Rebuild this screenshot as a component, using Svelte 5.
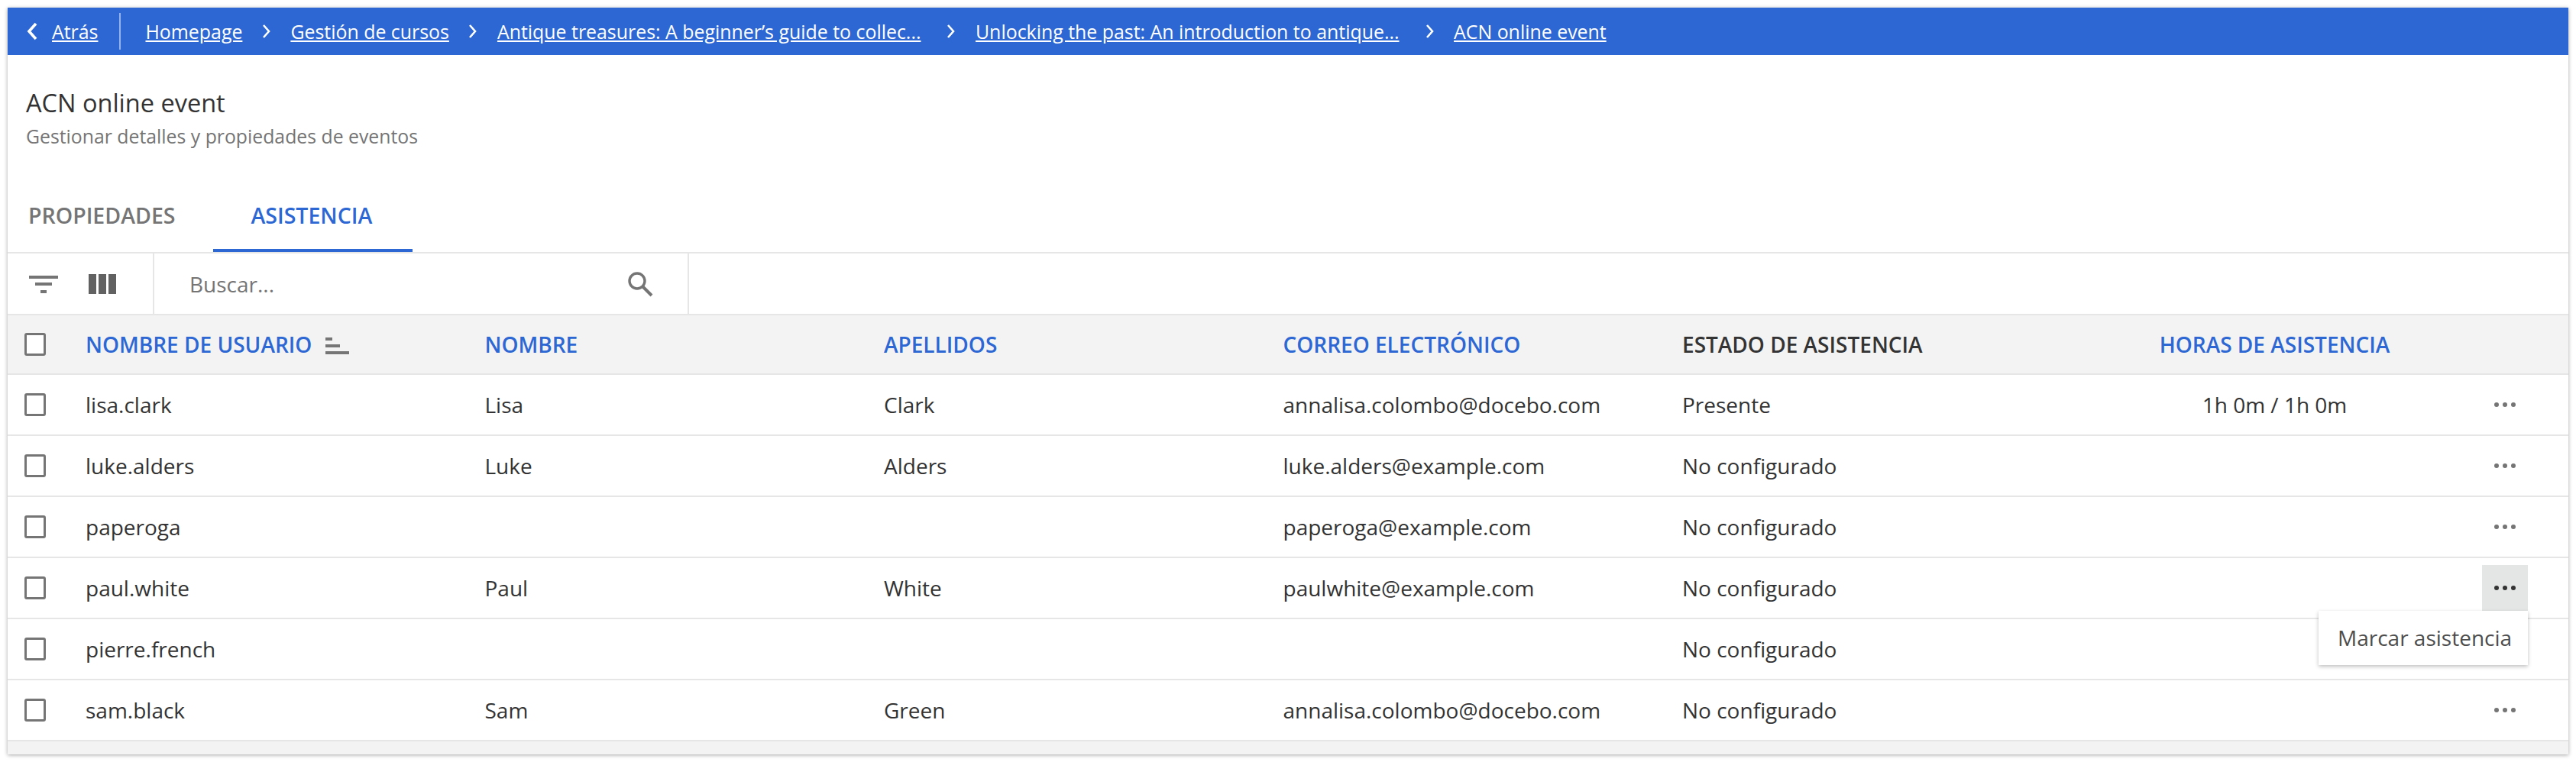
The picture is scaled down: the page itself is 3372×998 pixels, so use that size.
<script>
  const crumbs = [
    { label: 'Homepage' },
    { label: 'Gestión de cursos' },
    { label: 'Antique treasures: A beginner’s guide to collec...', cut: true },
    { label: 'Unlocking the past: An introduction to antique...', cut: true },
    { label: 'ACN online event' }
  ];
  const rows = [
    { user: 'lisa.clark', first: 'Lisa', last: 'Clark', mail: 'annalisa.colombo@docebo.com', status: 'Presente', hours: '1h 0m / 1h 0m' },
    { user: 'luke.alders', first: 'Luke', last: 'Alders', mail: 'luke.alders@example.com', status: 'No configurado', hours: '' },
    { user: 'paperoga', first: '', last: '', mail: 'paperoga@example.com', status: 'No configurado', hours: '' },
    { user: 'paul.white', first: 'Paul', last: 'White', mail: 'paulwhite@example.com', status: 'No configurado', hours: '', open: true },
    { user: 'pierre.french', first: '', last: '', mail: '', status: 'No configurado', hours: '', noMenu: true },
    { user: 'sam.black', first: 'Sam', last: 'Green', mail: 'annalisa.colombo@docebo.com', status: 'No configurado', hours: '' }
  ];
</script>

<div class="card">
  <nav class="bar">
    <svg class="back" viewBox="0 0 16 24" width="16" height="24"><path d="M13 2 4 12l9 10" fill="none" stroke="#fff" stroke-width="3.6"/></svg>
    <a class="atras" href="#a">Atrás</a>
    <span class="sep"></span>
    {#each crumbs as c, i}
      {#if i > 0}
        <svg class="chev" viewBox="0 0 12 20" width="12" height="20"><path d="M2 2l7 8-7 8" fill="none" stroke="#fff" stroke-width="2.6"/></svg>
      {/if}
      <a class:cut={c.cut} href="#c">{c.label}</a>
    {/each}
  </nav>

  <header class="head">
    <h1>ACN online event</h1>
    <p>Gestionar detalles y propiedades de eventos</p>
  </header>

  <div class="tabs">
    <span class="tab">PROPIEDADES</span>
    <span class="tab active">ASISTENCIA</span>
  </div>

  <div class="tools">
    <div class="icons">
      <svg viewBox="0 0 38 28" width="38" height="28"><path d="M0 3h38v4H0zM8 12h22v4H8zM15 22h8v4h-8z" fill="#757575"/></svg>
      <svg viewBox="0 0 36 28" width="36" height="28"><path d="M0 1h10v26H0zM13 1h10v26H13zM26 1h10v26H26z" fill="#616161"/></svg>
    </div>
    <div class="search">
      <span>Buscar...</span>
      <svg viewBox="0 0 36 36" width="36" height="36"><circle cx="14" cy="14" r="10" fill="none" stroke="#757575" stroke-width="3.4"/><path d="M21.5 21.5 33 33" stroke="#757575" stroke-width="4"/></svg>
    </div>
  </div>

  <div class="row th">
    <span class="box"></span>
    <span class="link sorted">NOMBRE DE USUARIO
      <svg viewBox="0 0 32 24" width="32" height="24"><path d="M0 1h9v4H0zM0 10h19v4H0zM0 19h31v4H0z" fill="#757575"/></svg>
    </span>
    <span class="link">NOMBRE</span>
    <span class="link">APELLIDOS</span>
    <span class="link">CORREO ELECTRÓNICO</span>
    <span class="plain">ESTADO DE ASISTENCIA</span>
    <span class="link center">HORAS DE ASISTENCIA</span>
    <span></span>
  </div>

  {#each rows as r}
    <div class="row">
      <span class="box"></span>
      <span>{r.user}</span>
      <span>{r.first}</span>
      <span>{r.last}</span>
      <span>{r.mail}</span>
      <span>{r.status}</span>
      <span class="center">{r.hours}</span>
      <span class="act" class:open={r.open}>
        {#if !r.noMenu}
          <svg viewBox="0 0 30 8" width="30" height="8"><circle cx="4" cy="4" r="3"/><circle cx="15" cy="4" r="3"/><circle cx="26" cy="4" r="3"/></svg>
        {/if}
        {#if r.open}
          <div class="menu">Marcar asistencia</div>
        {/if}
      </span>
    </div>
  {/each}
  <div class="foot"></div>
</div>

<style>
  :global(body) {
    margin: 0;
    background: #fff;
  }
  .card {
    box-sizing: border-box;
    width: 3352px;
    height: 978px;
    margin: 10px;
    background: #fff;
    box-shadow: 0 1px 5px rgba(0, 0, 0, 0.35);
    font-family: "Open Sans", sans-serif;
    font-size: 28px;
    color: #333;
    overflow: hidden;
  }
  .bar {
    display: flex;
    align-items: center;
    height: 62px;
    background: #2d67d4;
    padding-left: 24px;
    font-size: 24.9px;
    color: #fff;
    white-space: nowrap;
  }
  .bar a {
    color: #fff;
  }
  .bar a.cut {
    margin-right: 8.5px;
  }
  .back {
    margin-right: 18px;
  }
  .sep {
    width: 2px;
    height: 48px;
    background: rgba(255, 255, 255, 0.5);
    margin: 0 32px 0 28px;
  }
  .chev {
    margin: 0 25.5px;
  }
  .head {
    padding: 41px 24px 0;
    height: 160px;
    box-sizing: border-box;
  }
  h1 {
    margin: 0 0 5px;
    font-size: 32.5px;
    font-weight: 400;
    line-height: 44px;
    color: #333;
  }
  p {
    margin: 0;
    font-size: 24.8px;
    line-height: 32px;
    color: #757575;
  }
  .tabs {
    display: flex;
    height: 98px;
    padding-left: 27px;
    border-bottom: 2px solid #e6e6e6;
  }
  .tab {
    line-height: 100px;
    font-size: 28.5px;
    font-weight: 600;
    color: #757575;
  }
  .tab.active {
    box-sizing: border-box;
    height: 98px;
    margin-left: 50px;
    padding: 0 53px 0 49px;
    color: #2d67d4;
    border-bottom: 4px solid #2d67d4;
  }
  .tools {
    display: flex;
    height: 79px;
    border-bottom: 2px solid #e6e6e6;
  }
  .icons {
    display: flex;
    align-items: center;
    gap: 40px;
    width: 192px;
    padding-left: 28px;
    box-sizing: border-box;
    border-right: 2px solid #e6e6e6;
  }
  .search {
    display: flex;
    align-items: center;
    justify-content: space-between;
    width: 700px;
    box-sizing: border-box;
    padding: 0 44px 0 46px;
    border-right: 2px solid #e6e6e6;
    color: #757575;
  }
  .row {
    display: grid;
    grid-template-columns: 102px repeat(5, 522.5px) 506px 131.5px;
    align-items: center;
    height: 78px;
    border-bottom: 2px solid #e6e6e6;
    white-space: nowrap;
  }
  .row.th {
    height: 76px;
    background: #f3f3f3;
    font-weight: 600;
  }
  .box {
    box-sizing: border-box;
    width: 28px;
    height: 30px;
    margin-left: 22px;
    border: 3px solid #757575;
    border-radius: 3px;
    background: #fff;
  }
  .link {
    color: #2d67d4;
  }
  .sorted svg {
    margin-left: 10px;
    vertical-align: -3px;
  }
  .plain {
    color: #333;
  }
  .center {
    text-align: center;
  }
  .act {
    position: relative;
    display: flex;
    align-items: center;
    justify-content: center;
    width: 60px;
    height: 60px;
    margin-left: 18.5px;
    fill: #757575;
  }
  .act.open {
    background: #e4e5e5;
    fill: #333;
  }
  .menu {
    position: absolute;
    top: 60px;
    right: 0;
    width: 274px;
    height: 71px;
    box-sizing: border-box;
    padding-left: 25px;
    line-height: 70px;
    background: #fff;
    color: #4d4d4d;
    box-shadow: 0 2px 5px rgba(0, 0, 0, 0.25);
    white-space: nowrap;
  }
  .foot {
    height: 17px;
    background: #f3f3f3;
  }
</style>
